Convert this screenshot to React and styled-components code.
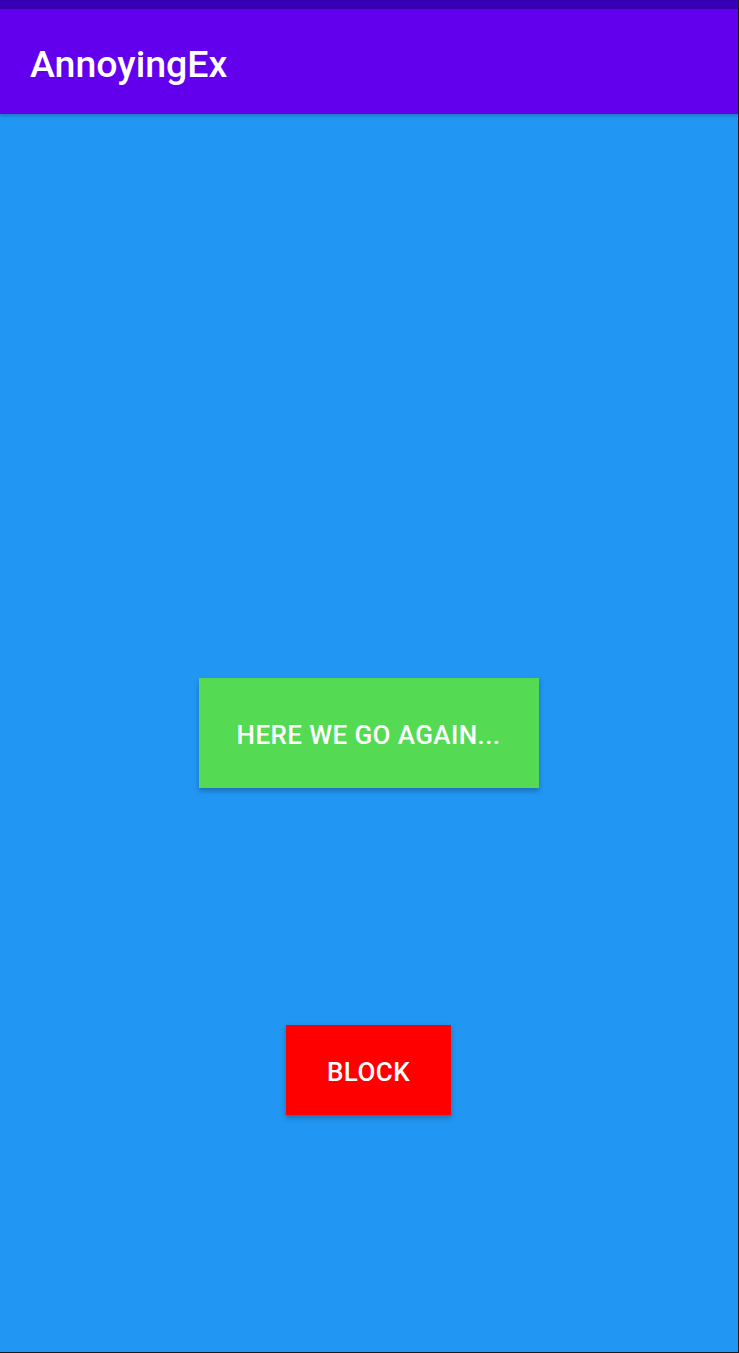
import React from 'react';
import styled, { createGlobalStyle } from 'styled-components';

const GlobalStyle = createGlobalStyle`
  html, body {
    margin: 0;
    padding: 0;
    height: 100%;
  }
  body {
    font-family: Roboto, "Liberation Sans", sans-serif;
  }
  #root {
    height: 100%;
  }
`;

const Screen = styled.div`
  width: 739px;
  height: 1353px;
  box-sizing: border-box;
  display: flex;
  flex-direction: column;
  background-color: #2196f3;
  border-right: 1px solid #1a1a1a;
  border-bottom: 1px solid #1a1a1a;
`;

const StatusBar = styled.div`
  height: 9px;
  background-color: #3700b3;
`;

const AppBar = styled.header`
  height: 105px;
  background-color: #6200ee;
  display: flex;
  align-items: center;
  padding-left: 30px;
  box-shadow: 0 2px 3px rgba(0, 0, 0, 0.2);
  position: relative;
  z-index: 1;
`;

const Title = styled.h1`
  margin: 0;
  color: #ffffff;
  font-size: 37.5px;
  font-weight: 500;
  padding-top: 4px;
`;

const Content = styled.main`
  flex: 1;
  display: flex;
  flex-direction: column;
  align-items: center;
`;

const Button = styled.button`
  border: none;
  border-radius: 0;
  padding: 4px 0 0;
  color: #ffffff;
  font-family: Roboto, "Liberation Sans", sans-serif;
  font-weight: 500;
  font-size: 26px;
  letter-spacing: 0.4px;
  text-transform: uppercase;
  background-color: ${p => p.$color};
  width: ${p => p.$width}px;
  height: ${p => p.$height}px;
  margin-top: ${p => p.$top}px;
  box-shadow: 0 3px 5px rgba(0, 0, 0, 0.25);
  margin-left: ${p => p.$shift || 0}px;
`;

const App = () => {
  return (
    <>
      <GlobalStyle />
      <Screen>
        <StatusBar />
        <AppBar>
          <Title>AnnoyingEx</Title>
        </AppBar>
        <Content>
          <Button $color="#55da53" $width={340} $height={110} $top={564} $shift={-1}>
            Here we go again...
          </Button>
          <Button $color="#ff0000" $width={165} $height={90} $top={237} $shift={-1}>
            Block
          </Button>
        </Content>
      </Screen>
    </>
  );
};

export default App;
